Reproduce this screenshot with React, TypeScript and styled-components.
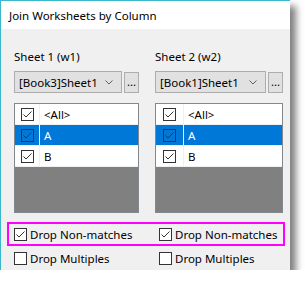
import React from "react";
import styled, { createGlobalStyle } from "styled-components";

const GlobalStyle = createGlobalStyle`
  body {
    margin: 0;
    background: #ffffff;
    font-family: "Noto Sans", "Segoe UI", sans-serif;
    font-size: 11.5px;
    color: #000;
  }
`;

const Window = styled.div`
  width: 289px;
  height: 269px;
  border-left: 1px solid #3bb7cb;
  border-top: 1px solid #3bb7cb;
  background: #f0f0f0;
  box-shadow: 6px 6px 7px rgba(0, 0, 0, 0.5);
  display: flex;
  flex-direction: column;
  overflow: hidden;
`;

const TitleBar = styled.div`
  height: 29px;
  background: #ffffff;
  display: flex;
  align-items: center;
  padding-left: 8px;
`;

const Body = styled.div`
  padding: 20px 0 0 13px;
  display: flex;
  flex-direction: column;
`;

const Columns = styled.div`
  display: grid;
  grid-template-columns: 125px 128px;
  column-gap: 16px;
  margin-bottom: 9px;
`;

const Column = styled.div`
  display: flex;
  flex-direction: column;
`;

const Label = styled.div`
  height: 16px;
  line-height: 16px;
`;

const ComboRow = styled.div`
  margin-top: 6px;
  display: flex;
  align-items: center;
  gap: 2px;
`;

const Combo = styled.div`
  flex: 1;
  height: 22px;
  box-sizing: border-box;
  border: 1px solid #adadad;
  background: #e1e1e1;
  display: flex;
  align-items: center;
  justify-content: space-between;
  padding: 0 8px 0 4px;
`;

const DotsButton = styled.div`
  width: 15px;
  height: 21px;
  box-sizing: border-box;
  border: 1px solid #adadad;
  background: #e1e1e1;
  display: flex;
  align-items: flex-end;
  justify-content: center;
  line-height: 14px;
  padding-bottom: 3px;
`;

const List = styled.div`
  margin-top: 10px;
  height: 110px;
  box-sizing: border-box;
  border: 1px solid #828790;
  background: #808080;
  display: flex;
  flex-direction: column;
`;

const Row = styled.div<{ $check: number; $selected?: boolean }>`
  display: grid;
  grid-template-columns: ${({ $check }) => $check}px 1fr;
  height: 21px;
  box-sizing: border-box;
  border-bottom: 1px solid #f0f0f0;
  background: ${({ $selected }) => ($selected ? "#0078d7" : "#ffffff")};
  color: ${({ $selected }) => ($selected ? "#ffffff" : "#000000")};
`;

const CheckCell = styled.div`
  display: flex;
  align-items: center;
  justify-content: center;
  border-right: 1px solid #f0f0f0;
`;

const TextCell = styled.div`
  display: flex;
  align-items: center;
  padding-left: 4px;
`;

const OptionRow = styled.div<{ $highlight?: boolean }>`
  margin-left: -7px;
  width: 278px;
  height: 24px;
  box-sizing: border-box;
  border: 2px solid ${({ $highlight }) => ($highlight ? "#ff00ff" : "transparent")};
  display: grid;
  grid-template-columns: 145px 1fr;
  align-items: center;
  padding-left: 5px;
`;

const Option = styled.label`
  display: flex;
  align-items: center;
  gap: 3px;
`;

const Check = ({ checked, fill = "#ffffff" }: { checked: boolean; fill?: string }) => (
  <svg width="13" height="13" viewBox="0 0 13 13">
    <rect x="0.5" y="0.5" width="12" height="12" fill={fill} stroke="#333333" />
    {checked && (
      <polyline
        points="2.5,6.5 5,9 10.5,3.5"
        fill="none"
        stroke="#333333"
        strokeWidth="1"
      />
    )}
  </svg>
);

const Chevron = () => (
  <svg width="8" height="5" viewBox="0 0 8 5">
    <polyline points="0.5,0.5 4,4 7.5,0.5" fill="none" stroke="#606060" strokeWidth="1" />
  </svg>
);

type SheetProps = {
  label: string;
  book: string;
  checkWidth: number;
};

const items = ["<All>", "A", "B"];

const SheetColumn = ({ label, book, checkWidth }: SheetProps) => (
  <Column>
    <Label>{label}</Label>
    <ComboRow>
      <Combo>
        <span>{book}</span>
        <Chevron />
      </Combo>
      <DotsButton>...</DotsButton>
    </ComboRow>
    <List>
      {items.map((it) => (
        <Row key={it} $check={checkWidth} $selected={it === "A"}>
          <CheckCell>
            <Check checked fill="none" />
          </CheckCell>
          <TextCell>{it}</TextCell>
        </Row>
      ))}
    </List>
  </Column>
);

export default function App() {
  return (
    <>
      <GlobalStyle />
      <Window>
        <TitleBar>Join Worksheets by Column</TitleBar>
        <Body>
          <Columns>
            <SheetColumn label="Sheet 1 (w1)" book="[Book3]Sheet1" checkWidth={25} />
            <SheetColumn label="Sheet 2 (w2)" book="[Book1]Sheet1" checkWidth={28} />
          </Columns>
          <OptionRow $highlight>
            <Option>
              <Check checked />
              Drop Non-matches
            </Option>
            <Option>
              <Check checked />
              Drop Non-matches
            </Option>
          </OptionRow>
          <OptionRow>
            <Option>
              <Check checked={false} />
              Drop Multiples
            </Option>
            <Option>
              <Check checked={false} />
              Drop Multiples
            </Option>
          </OptionRow>
        </Body>
      </Window>
    </>
  );
}
